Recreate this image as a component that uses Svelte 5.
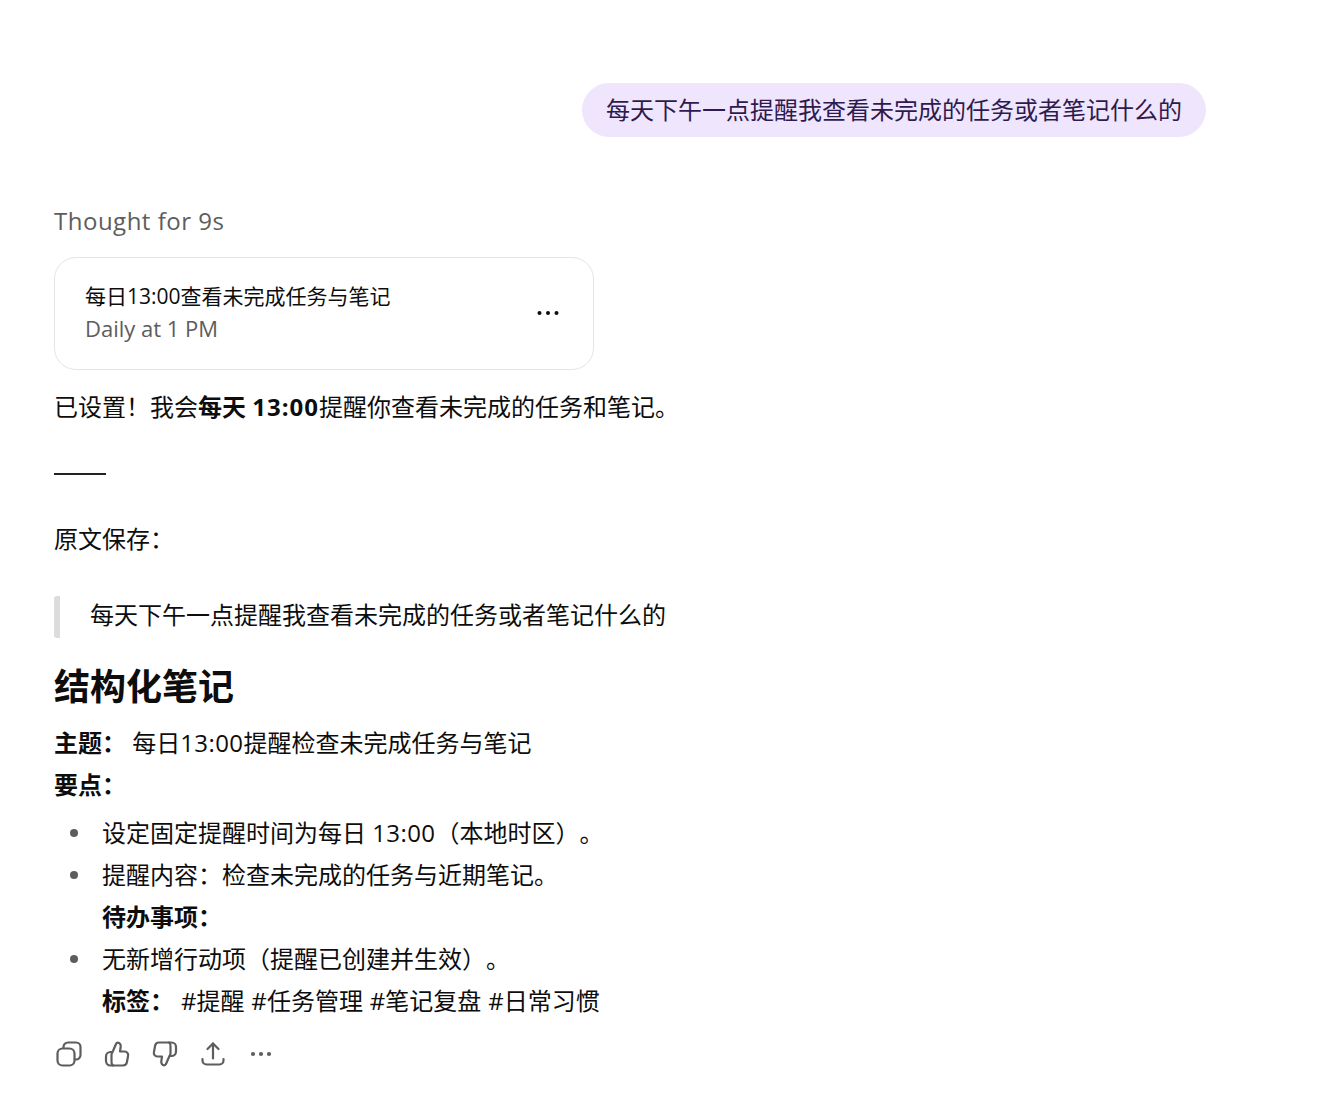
<script lang="ts">
  const bullets = [
    { text: '设定固定提醒时间为每日 ', num: '13:00', rest: '（本地时区）。' },
    { text: '提醒内容：检查未完成的任务与近期笔记。', num: '', rest: '' }
  ];
</script>

<div class="page">
  <div class="user-row">
    <div class="bubble">每天下午一点提醒我查看未完成的任务或者笔记什么的</div>
  </div>

  <div class="thought">Thought for 9s</div>

  <div class="card">
    <div class="card-text">
      <div class="card-title">每日13:00查看未完成任务与笔记</div>
      <div class="card-sub">Daily at 1 PM</div>
    </div>
    <svg class="card-more" width="24" height="24" viewBox="0 0 24 24" fill="#0d0d0d">
      <circle cx="3.5" cy="12" r="2" />
      <circle cx="12" cy="12" r="2" />
      <circle cx="20.5" cy="12" r="2" />
    </svg>
  </div>

  <p class="confirm">已设置！我会<strong>每天 <span class="num-bold">13:00</span></strong>提醒你查看未完成的任务和笔记。</p>
  <hr />
  <p class="saved">原文保存：</p>
  <blockquote>每天下午一点提醒我查看未完成的任务或者笔记什么的</blockquote>

  <h2>结构化笔记</h2>
  <p><strong>主题：</strong> 每日<span class="num">13:00</span>提醒检查未完成任务与笔记</p>
  <p><strong>要点：</strong></p>
  <ul>
    {#each bullets as b}
      <li class="dot">{b.text}{#if b.num}<span class="num">{b.num}</span>{/if}{b.rest}</li>
    {/each}
    <li><strong>待办事项：</strong></li>
    <li class="dot">无新增行动项（提醒已创建并生效）。</li>
    <li class="tags"><strong>标签：</strong> #提醒 #任务管理 #笔记复盘 #日常习惯</li>
  </ul>

  <div class="actions">
    <svg width="30" height="30" viewBox="0 0 30 30" fill="none" stroke="#5d5d5d" stroke-width="2.2" stroke-linejoin="round">
      <rect x="3.5" y="9.5" width="17" height="17" rx="5" />
      <path d="M9.5 9.3V8a4.5 4.5 0 0 1 4.5-4.5h8A4.5 4.5 0 0 1 26.5 8v8a4.5 4.5 0 0 1-4.5 4.5h-1.3" />
    </svg>
    <svg width="30" height="30" viewBox="0 0 30 30" fill="none" stroke="#5d5d5d" stroke-width="2.2" stroke-linejoin="round" stroke-linecap="round">
      <path d="M11 26.5h10a4 4 0 0 0 3.9-3.2l1.2-6.5a3.5 3.5 0 0 0-3.4-4.3H18l.7-4.8c.3-2-1-4-2.9-4-.9 0-1.5.6-1.9 1.5l-2.7 6.3c-.8 1.6-1.7 2.6-1.7 4.3v6.5a4.2 4.2 0 0 0 1.5 4z" />
      <path d="M11 26.5H8.5A4.5 4.5 0 0 1 4 22v-4.5a4.5 4.5 0 0 1 4.5-4.5h1.8" />
    </svg>
    <svg width="30" height="30" viewBox="0 0 30 30" fill="none" stroke="#5d5d5d" stroke-width="2.2" stroke-linejoin="round" stroke-linecap="round">
      <path d="M19 3.5H9a4 4 0 0 0-3.9 3.2l-1.2 6.5a3.5 3.5 0 0 0 3.4 4.3H12l-.7 4.8c-.3 2 1 4 2.9 4 .9 0 1.5-.6 1.9-1.5l2.7-6.3c.8-1.6 1.7-2.6 1.7-4.3V7.5a4.2 4.2 0 0 0-1.5-4z" />
      <path d="M19 3.5h2.5A4.5 4.5 0 0 1 26 8v4.5a4.5 4.5 0 0 1-4.5 4.5h-1.8" />
    </svg>
    <svg width="30" height="30" viewBox="0 0 30 30" fill="none" stroke="#5d5d5d" stroke-width="2.2" stroke-linejoin="round" stroke-linecap="round">
      <path d="M15 19.5V4.5" />
      <path d="M9.5 10 15 4.5l5.5 5.5" />
      <path d="M4.5 20v1.5a4 4 0 0 0 4 4h13a4 4 0 0 0 4-4V20" />
    </svg>
    <svg width="30" height="30" viewBox="0 0 30 30" fill="#5d5d5d">
      <circle cx="7" cy="15" r="2.1" />
      <circle cx="15" cy="15" r="2.1" />
      <circle cx="23" cy="15" r="2.1" />
    </svg>
  </div>
</div>

<style>
  :global(body) {
    margin: 0;
    background: #fff;
  }

  .page {
    width: 1336px;
    height: 1110px;
    box-sizing: border-box;
    padding: 83px 130px 0 54px;
    font-family: "Open Sans", "Noto Sans CJK SC", sans-serif;
    font-size: 24px;
    line-height: 42px;
    color: #0d0d0d;
    overflow: hidden;
    text-spacing-trim: space-all;
  }

  .user-row {
    display: flex;
    justify-content: flex-end;
  }

  .bubble {
    background: #efe5fd;
    color: #2f1a4f;
    border-radius: 27px;
    padding: 6px 24px;
  }

  .thought {
    margin-top: 63px;
    color: #5d5d5d;
    letter-spacing: 0.5px;
  }

  .card {
    width: 540px;
    height: 113px;
    box-sizing: border-box;
    margin-top: 15px;
    padding: 0 30px;
    border: 1px solid #e5e5e5;
    border-radius: 22px;
    display: flex;
    align-items: center;
    justify-content: space-between;
  }

  .card-text {
    padding-bottom: 6px;
  }

  .card-title {
    font-size: 21px;
    line-height: 35px;
  }

  .card-sub {
    font-size: 22px;
    line-height: 29px;
    color: #5d5d5d;
  }

  .card-more {
    margin: 0 3px 2px 0;
  }

  p {
    margin: 0;
  }

  .confirm {
    margin-top: 16px;
  }

  .num {
    letter-spacing: 0.4px;
  }

  .num-bold {
    letter-spacing: 1px;
  }

  hr {
    width: 52px;
    height: 2px;
    margin: 45px 0 0;
    border: 0;
    background: #222;
  }

  .saved {
    margin-top: 43px;
  }

  blockquote {
    margin: 36px 0 0;
    padding: 0 0 4px 30px;
    border-left: 6px solid #dcdcdc;
    border-radius: 3px;
    line-height: 38px;
  }

  h2 {
    margin: 19px 0 5px;
    font-size: 36px;
    line-height: 60px;
    font-weight: 700;
  }

  strong {
    font-weight: 700;
  }

  ul {
    margin: 6px 0 0;
    padding: 0 0 0 48px;
    list-style: none;
  }

  li {
    position: relative;
  }

  /* the bullet sits further out than a default marker */
  li.dot::before {
    content: '';
    position: absolute;
    left: -32px;
    top: 17px;
    width: 8px;
    height: 8px;
    border-radius: 50%;
    background: #5d5d5d;
  }

  .tags {
    word-spacing: 0.7px;
  }

  .actions {
    display: flex;
    gap: 18px;
    margin-top: 17px;
  }
</style>
